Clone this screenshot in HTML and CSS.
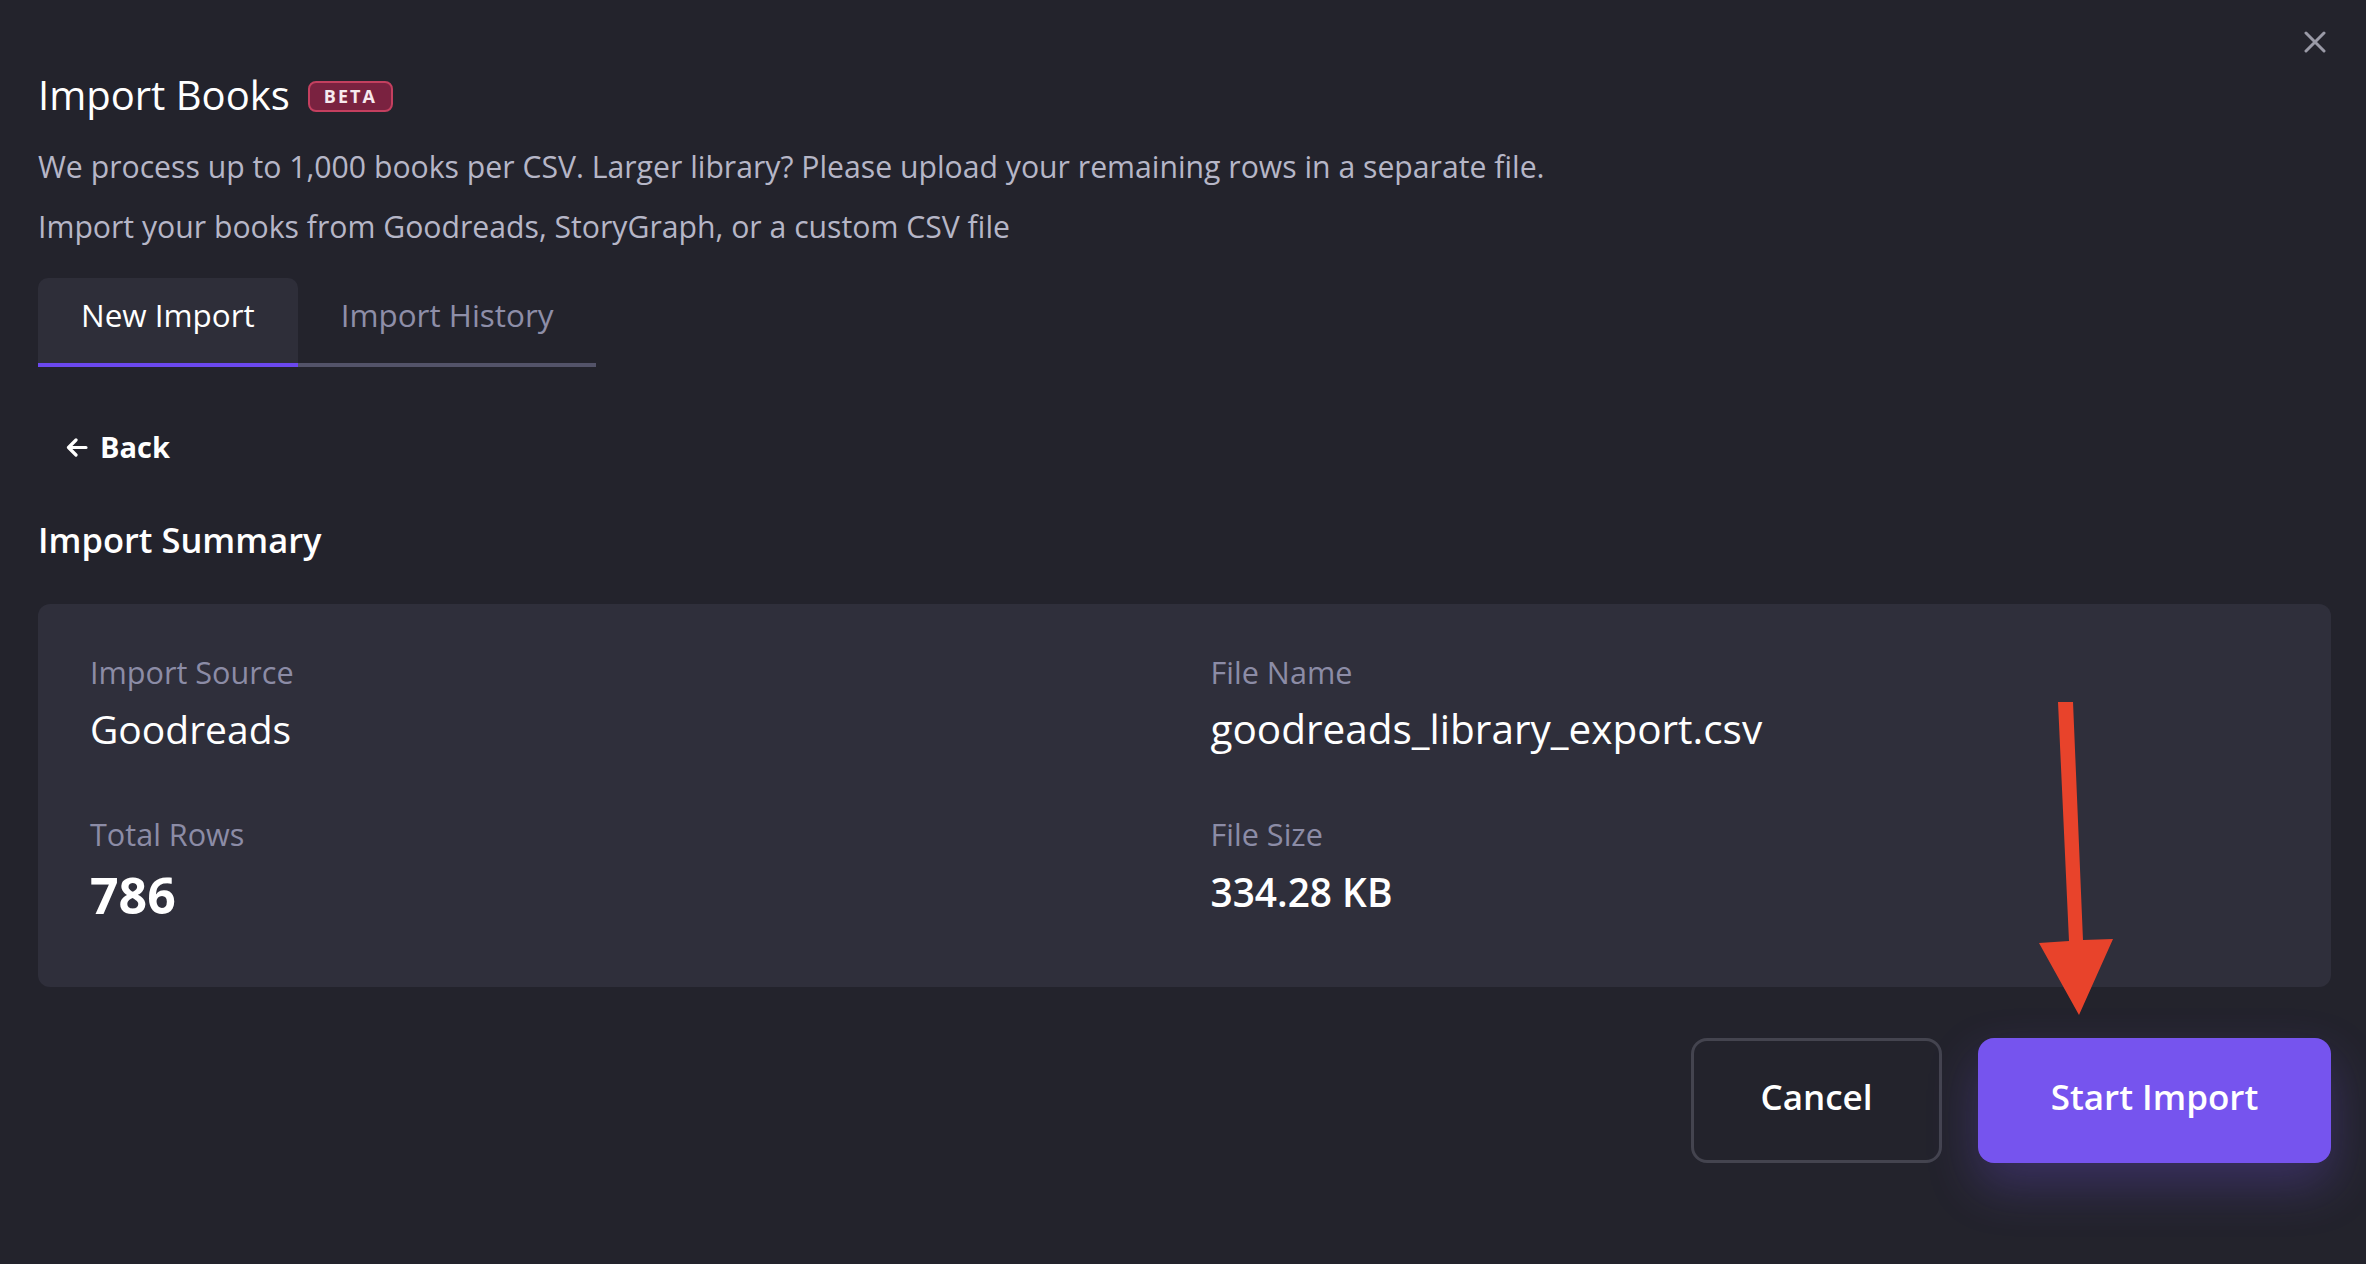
FILE: index.html
```html
<!DOCTYPE html>
<html lang="en">
<head>
<meta charset="utf-8">
<title>Import Books</title>
<link rel="stylesheet" href="styles.css">
</head>
<body>
<div class="modal">
  <button class="close" aria-label="Close">
    <svg width="22" height="22" viewBox="0 0 22 22"><path d="M2 2L20 20M20 2L2 20" stroke="#9a9aa7" stroke-width="3" stroke-linecap="round" fill="none"/></svg>
  </button>

  <header class="title-row">
    <h1 class="title">Import Books</h1>
    <span class="badge">BETA</span>
  </header>

  <p class="desc desc-first">We process up to 1,000 books per CSV. Larger library? Please upload your remaining rows in a separate file.</p>
  <p class="desc desc-second">Import your books from Goodreads, StoryGraph, or a custom CSV file</p>

  <nav class="tabs">
    <button class="tab tab-active">New Import</button>
    <button class="tab">Import History</button>
  </nav>

  <button class="back">
    <svg width="22" height="19" viewBox="0 0 22 19"><path d="M20 9.5H3M10 2L2.5 9.5L10 17" stroke="#ffffff" stroke-width="3.2" stroke-linecap="round" stroke-linejoin="round" fill="none"/></svg>
    <span>Back</span>
  </button>

  <h2 class="section-title">Import Summary</h2>

  <section class="card">
    <div class="field">
      <div class="label">Import Source</div>
      <div class="value">Goodreads</div>
    </div>
    <div class="field">
      <div class="label">File Name</div>
      <div class="value value-file">goodreads_library_export.csv</div>
    </div>
    <div class="field">
      <div class="label">Total Rows</div>
      <div class="value value-big">786</div>
    </div>
    <div class="field">
      <div class="label">File Size</div>
      <div class="value value-size">334.28 KB</div>
    </div>
  </section>

  <div class="actions">
    <button class="btn btn-cancel">Cancel</button>
    <button class="btn btn-primary">Start Import</button>
  </div>

  <svg class="annotation" width="90" height="325" viewBox="0 0 90 325">
    <polygon points="28,7 43,7 53,245 83,244 49,320 9,248 39,246" fill="#e8432b"/>
  </svg>
</div>
</body>
</html>
```

FILE: styles.css
```css
* {
  box-sizing: border-box;
}

html, body {
  margin: 0;
  padding: 0;
  background: #23232c;
}

body {
  font-family: "Open Sans", "Noto Sans", sans-serif;
  color: #ffffff;
  width: 2366px;
  height: 1264px;
  overflow: hidden;
}

button {
  font-family: inherit;
  border: none;
  background: none;
  color: inherit;
  cursor: pointer;
  padding: 0;
  margin: 0;
}

.modal {
  position: relative;
  padding: 75px 35px 0 38px;
  height: 1264px;
}

.close {
  position: absolute;
  top: 31px;
  left: 2304px;
  width: 22px;
  height: 22px;
  display: flex;
}

.title-row {
  display: flex;
  align-items: center;
  gap: 18px;
  height: 40px;
}

.title {
  margin: 0;
  font-size: 40px;
  line-height: 40px;
  font-weight: 500;
  color: #ffffff;
}

.badge {
  margin-top: 2px;
  height: 31px;
  padding: 0 14px;
  display: flex;
  align-items: center;
  background: #7a2240;
  border: 2px solid #c43f5f;
  border-radius: 8px;
  font-size: 18px;
  font-weight: 700;
  letter-spacing: 2px;
  color: #f6e9ee;
}

.desc {
  margin: 0;
  font-size: 30.2px;
  line-height: 40px;
  color: #b6b6c7;
}

.desc-first {
  margin-top: 32px;
}

.desc-second {
  margin-top: 20px;
}

.tabs {
  display: flex;
  margin-top: 31px;
}

.tab {
  height: 89px;
  padding: 17px 43px 28px;
  font-size: 31.4px;
  line-height: 40px;
  font-weight: 500;
  color: #8e8ea8;
  border-bottom: 4px solid #535369;
  border-radius: 10px 10px 0 0;
}

.tab-active {
  background: #2e2e39;
  color: #ffffff;
  border-bottom-color: #6b48ee;
}

.back {
  margin-top: 62px;
  margin-left: 28px;
  display: flex;
  align-items: center;
  gap: 12px;
  font-size: 29px;
  line-height: 36px;
  font-weight: 700;
  color: #ffffff;
}

.back svg {
  margin-top: 1px;
}

.section-title {
  margin: 53px 0 0;
  font-size: 34.5px;
  line-height: 44px;
  font-weight: 600;
  color: #ffffff;
}

.card {
  margin-top: 42px;
  height: 383px;
  padding: 48px 52px 0;
  background: #2f2f3b;
  border-radius: 12px;
  display: grid;
  grid-template-columns: 1fr 1fr;
  column-gap: 52px;
  row-gap: 61px;
  align-content: start;
}

.label {
  font-size: 30.6px;
  line-height: 40px;
  color: #8c8ca6;
}

.value {
  margin-top: 13px;
  font-size: 39px;
  line-height: 48px;
  font-weight: 500;
  color: #ffffff;
}

.value-file {
  font-size: 40.5px;
}

.value-big {
  font-size: 50px;
  line-height: 54px;
  font-weight: 700;
  margin-top: 14px;
}

.value-size {
  font-size: 38.8px;
  line-height: 48px;
  font-weight: 600;
  margin-top: 14px;
}

.actions {
  margin-top: 51px;
  display: flex;
  justify-content: flex-end;
  gap: 36px;
}

.btn {
  height: 125px;
  padding-bottom: 8px;
  font-size: 35px;
  font-weight: 600;
  border-radius: 16px;
  color: #ffffff;
}

.btn-cancel {
  width: 251px;
  border: 3px solid #44444f;
}

.btn-primary {
  width: 353px;
  background: #7654ee;
  box-shadow: 0 22px 50px rgba(118, 84, 238, 0.28);
}

.annotation {
  position: absolute;
  left: 2030px;
  top: 695px;
}
```
